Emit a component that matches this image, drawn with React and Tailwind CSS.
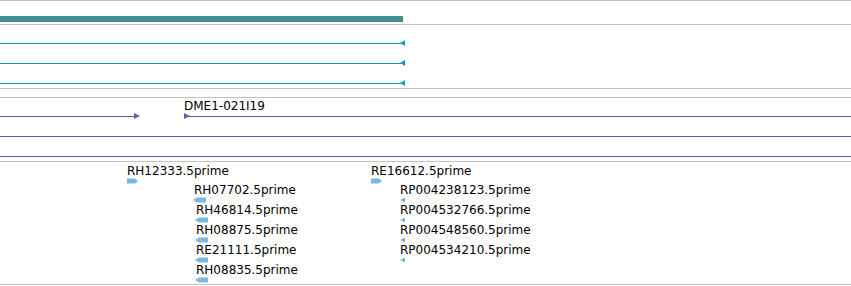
import React from 'react';

const GRAY = 'border-[#c4c4c4]';
const FWD = '#7db6de';
const PURPLE = 'bg-[#7052a9]';

const LeftHead = ({ color }) => (
  <svg width="5" height="6" viewBox="0 0 5 6" className="block">
    <polygon points="0,3 5,0 5,6" fill={color} />
  </svg>
);

const RightHead = ({ color }) => (
  <svg width="6" height="6" viewBox="0 0 6 6" className="block">
    <polygon points="0,0 6,3 0,6" fill={color} />
  </svg>
);

const glyphs = {
  fwd: (
    <svg width="12" height="6" viewBox="0 0 12 6" className="block">
      <polygon points="0,0.5 8,0.5 11,3 8,5.5 0,5.5" fill={FWD} />
    </svg>
  ),
  rev: (
    <svg width="13" height="6" viewBox="0 0 13 6" className="block">
      <polygon points="0,3 4,0.5 13,0.5 13,5.5 4,5.5" fill={FWD} />
    </svg>
  ),
  tiny: (
    <svg width="5" height="6" viewBox="0 0 5 6" className="block">
      <polygon points="0,3 5,0.5 5,5.5" fill={FWD} />
    </svg>
  ),
};

const font = "whitespace-nowrap text-[12px] leading-[14px] text-black font-['DejaVu_Sans',sans-serif]";

// one read: name above, strand glyph below
const Read = ({ name, kind, shift = '' }) => (
  <div className={`flex flex-col h-[20px] ${shift}`}>
    <span className={`${font} ${kind === 'rev' ? 'pl-px' : ''}`}>{name}</span>
    {glyphs[kind]}
  </div>
);

const ReadStack = ({ lead, rest, kind, indent, shift = '' }) => (
  <div className="flex flex-col pt-[2px]">
    <Read name={lead} kind="fwd" />
    <div className={`flex flex-col -mt-px ${indent}`}>
      {rest.map((n, i) => (
        <Read key={n} name={n} kind={kind} shift={i > 0 ? shift : ''} />
      ))}
    </div>
  </div>
);

export default function App() {
  return (
    <div className="w-[851px] h-[286px] bg-white overflow-hidden flex flex-col">
      {/* gene span */}
      <div className={`h-[24px] border-t ${GRAY} pt-[15px]`}>
        <div className="w-[403px] h-[6px] bg-[#418f8f]" />
      </div>

      {/* transcripts */}
      <div className={`h-[65px] border-y ${GRAY} flex flex-col pt-[18px] gap-[19px]`}>
        {[0, 1, 2].map((i) => (
          <div key={i} className="relative w-[402px] h-px bg-[#1b8fb1]">
            <div className="absolute left-[400px] -top-[3px]">
              <LeftHead color="#1697bd" />
            </div>
          </div>
        ))}
      </div>

      {/* clones */}
      <div className={`relative mt-[8px] h-[65px] border-y ${GRAY} flex flex-col pt-[15px] gap-[13px]`}>
        <span className={`absolute left-[184px] top-px ${font}`}>DME1-021I19</span>
        <div className="flex items-center h-[6px]">
          <div className={`w-[134px] h-px ${PURPLE}`} />
          <RightHead color="#7052a9" />
          <div className="w-[44px]" />
          <RightHead color="#7052a9" />
          <div className={`flex-1 h-px -ml-[4px] ${PURPLE}`} />
        </div>
        <div className={`h-px mt-[4px] ${PURPLE}`} />
        <div className={`h-px mt-[6px] ${PURPLE}`} />
      </div>

      {/* 5prime reads */}
      <div className={`relative h-[123px] border-b ${GRAY} flex items-start`}>
        <div className="ml-[127px]">
          <ReadStack
            lead="RH12333.5prime"
            kind="rev"
            indent="ml-[66px]"
            shift="ml-[2px]"
            rest={['RH07702.5prime', 'RH46814.5prime', 'RH08875.5prime', 'RE21111.5prime', 'RH08835.5prime']}
          />
        </div>
        <div className="absolute left-[371px] top-0">
          <ReadStack
            lead="RE16612.5prime"
            kind="tiny"
            indent="ml-[29px]"
            rest={['RP004238123.5prime', 'RP004532766.5prime', 'RP004548560.5prime', 'RP004534210.5prime']}
          />
        </div>
      </div>
    </div>
  );
}
